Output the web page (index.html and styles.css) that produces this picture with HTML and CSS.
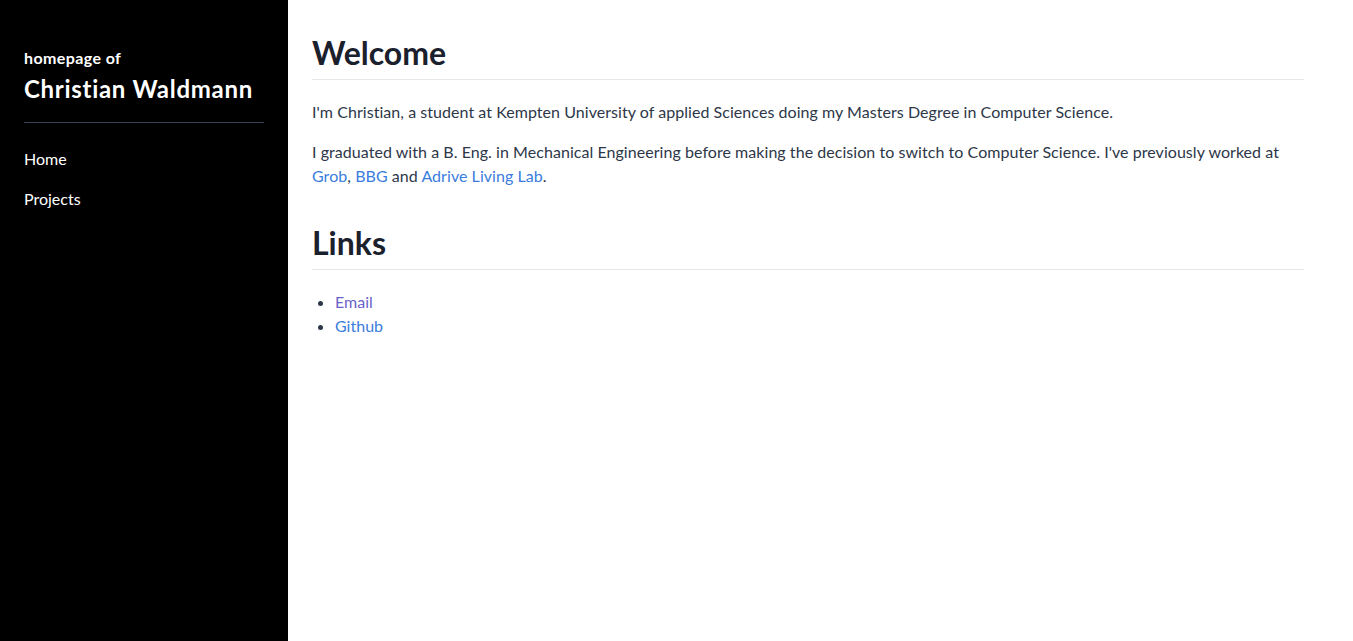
FILE: index.html
```html
<!DOCTYPE html>
<html lang="en">
<head>
<meta charset="utf-8">
<title>Christian Waldmann</title>
<link rel="stylesheet" href="styles.css">
</head>
<body>
<div class="layout">
  <aside class="sidebar">
    <div class="brand-pre">homepage of</div>
    <div class="brand-name">Christian Waldmann</div>
    <hr class="sidebar-rule">
    <nav class="nav">
      <a class="nav-link" href="#">Home</a>
      <a class="nav-link" href="#">Projects</a>
    </nav>
  </aside>
  <main class="content">
    <h1 class="heading first">Welcome</h1>
    <p class="para">I'm Christian, a student at Kempten University of applied Sciences doing my Masters Degree in Computer Science.</p>
    <p class="para">I graduated with a B. Eng. in Mechanical Engineering before making the decision to switch to Computer Science. I've previously worked at <a class="link" href="#">Grob</a>, <a class="link" href="#">BBG</a> and <a class="link" href="#">Adrive Living Lab</a>.</p>
    <h1 class="heading">Links</h1>
    <ul class="list">
      <li><a class="link visited" href="#">Email</a></li>
      <li><a class="link" href="#">Github</a></li>
    </ul>
  </main>
</div>
</body>
</html>
```
FILE: styles.css
```css
html, body {
  margin: 0;
  padding: 0;
  height: 100%;
}
body {
  font-family: "Lato", "Noto Sans", sans-serif;
  font-size: 16px;
  color: #2d3748;
  background: #ffffff;
}
.layout {
  display: flex;
  min-height: 100vh;
}
.sidebar {
  width: 288px;
  flex: none;
  background: #000000;
  color: #ffffff;
  padding: 47px 24px 24px;
  box-sizing: border-box;
}
.brand-pre {
  font-size: 16px;
  font-weight: 700;
  line-height: 22px;
  letter-spacing: 0.4px;
}
.brand-name {
  font-size: 24px;
  font-weight: 700;
  line-height: 32px;
  margin-top: 4px;
  letter-spacing: 0.7px;
}
.sidebar-rule {
  border: 0;
  border-top: 1px solid #374151;
  margin: 17px 0 0;
}
.nav {
  display: flex;
  flex-direction: column;
  gap: 16px;
  padding-top: 24px;
}
.nav-link {
  color: #ffffff;
  text-decoration: none;
  line-height: 24px;
}
.content {
  flex: 1;
  padding: 33px 49px 24px 24px;
}
.heading {
  font-size: 32px;
  font-weight: 700;
  line-height: 40px;
  color: #1a202c;
  padding-bottom: 6px;
  border-bottom: 1px solid #e5e7eb;
  margin: 35px 0 20px;
}
.heading.first {
  margin-top: 0;
}
.para {
  line-height: 24px;
  margin: 0 0 16px;
  letter-spacing: 0.05px;
}
.link {
  color: #3b7ddd;
  text-decoration: none;
}
.link.visited {
  color: #6b63c9;
}
.list {
  margin: 0;
  padding-left: 23px;
  line-height: 24px;
}
```
